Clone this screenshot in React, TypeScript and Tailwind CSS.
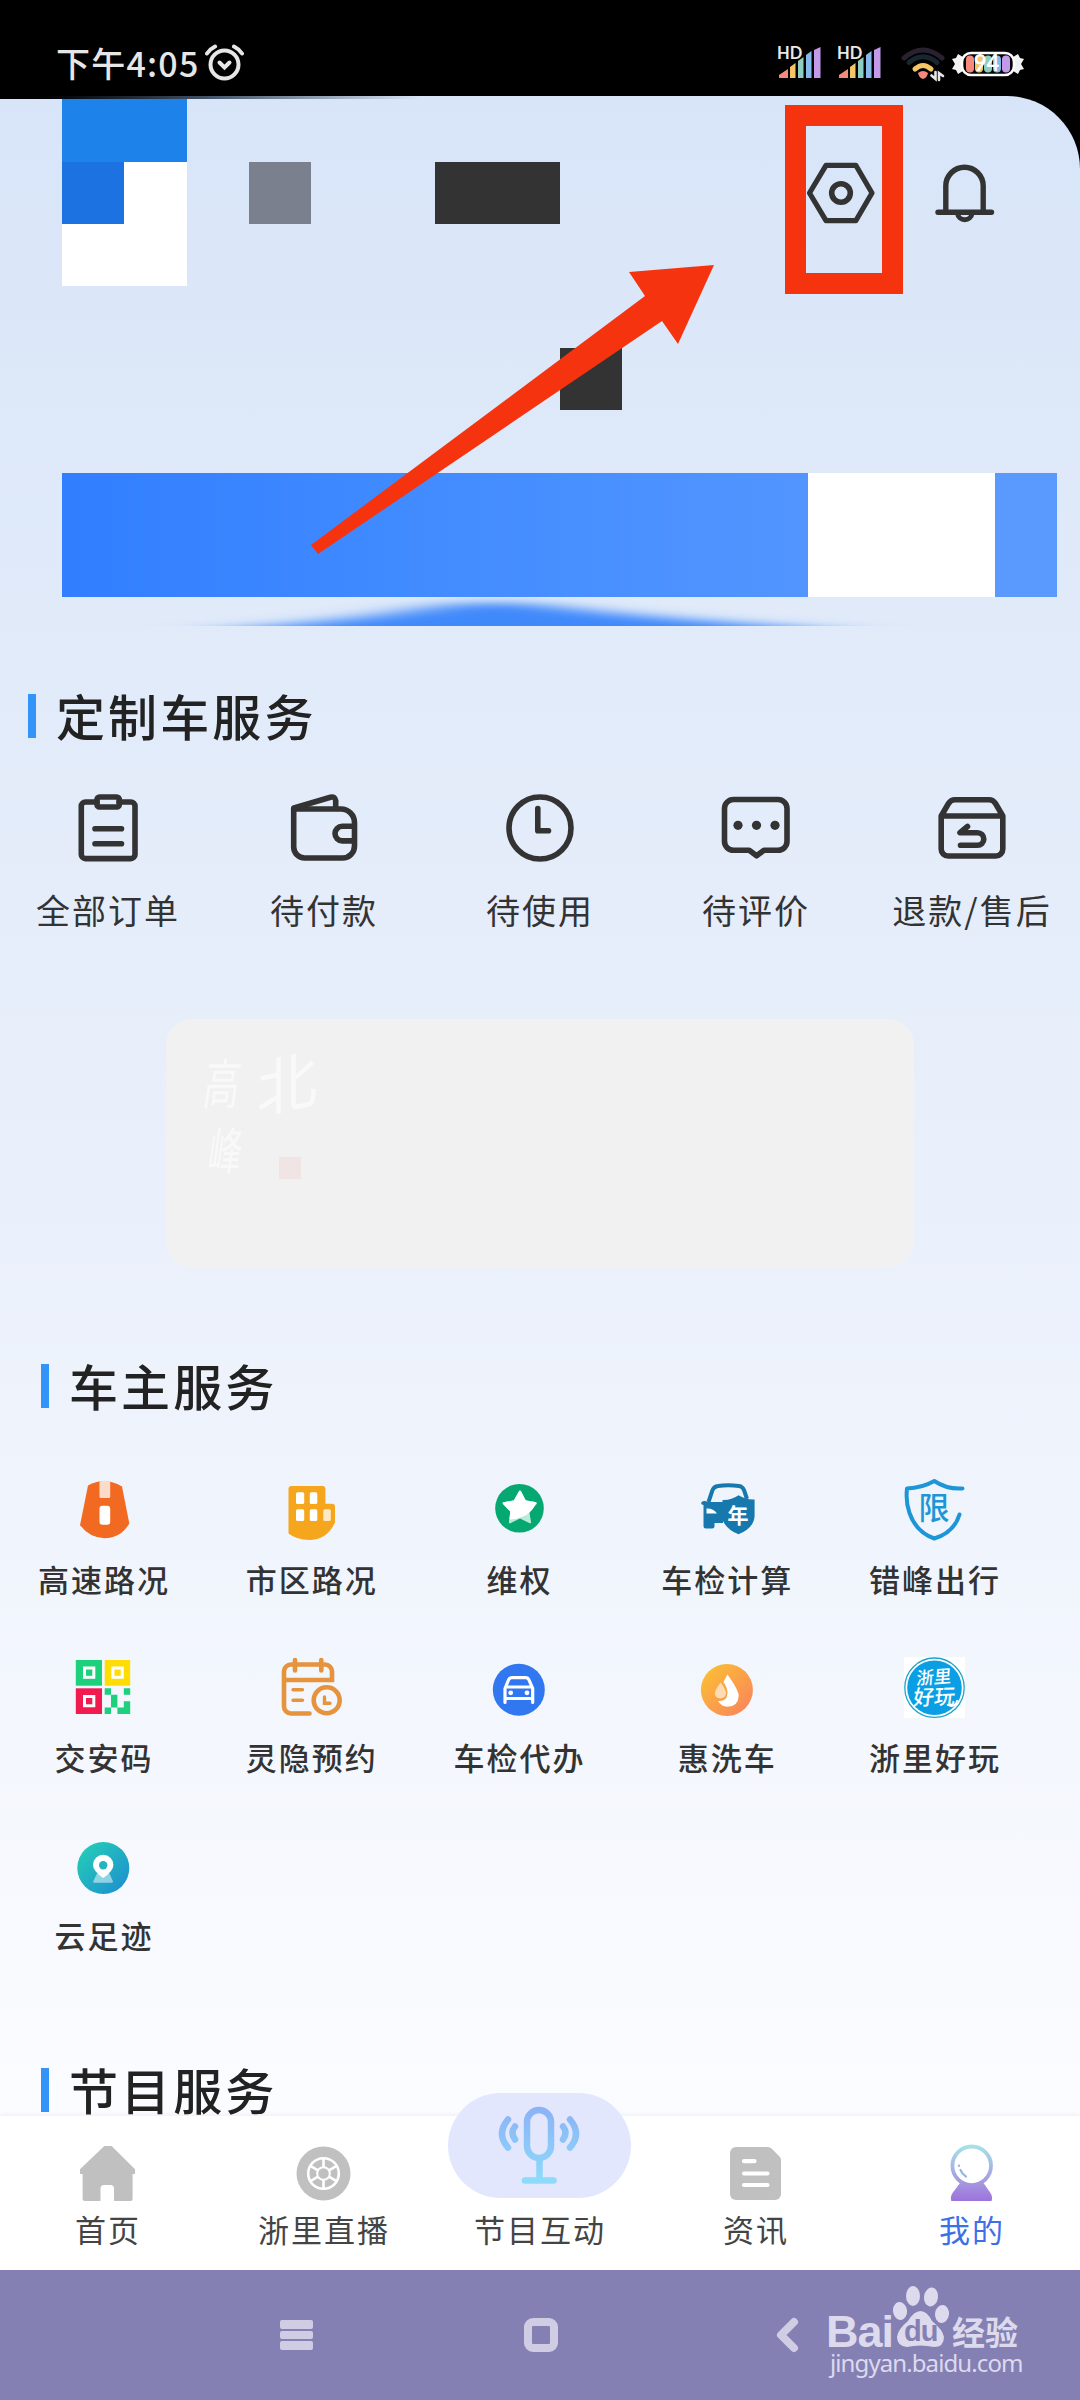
import type { ReactNode } from "react";

type IconProps = { children: ReactNode; size: number };

function Icon({ children, size }: IconProps) {
  return (
    <svg width={size} height={size} viewBox={`0 0 ${size} ${size}`} fill="none" className="shrink-0 overflow-visible">
      {children}
    </svg>
  );
}

function LineIcon({ children }: { children: ReactNode }) {
  return (
    <Icon size={80}>
      <g stroke="#333" strokeWidth="5.6" strokeLinecap="round" strokeLinejoin="round">
        {children}
      </g>
    </Icon>
  );
}

const orders = [
  {
    label: "全部订单",
    icon: (
      <>
        <path d="M29 14H17.5a4.2 4.2 0 0 0-4.2 4.2v48.2a4.2 4.2 0 0 0 4.2 4.2h45.3a4.2 4.2 0 0 0 4.2-4.2V18.2a4.2 4.2 0 0 0-4.2-4.2H51" />
        <rect x="29" y="9" width="22.3" height="10" rx="2.5" />
        <path d="M27 40.7H53.5M27 55.7H53.5" />
      </>
    ),
  },
  {
    label: "待付款",
    icon: (
      <>
        <path d="M9.7 21H57a13.5 13.5 0 0 1 13.5 13.5V58a12 12 0 0 1-12 12H20.7a11 11 0 0 1-11-11Z" />
        <path d="M10 20L46.5 9.2q4.5-1.2 5.2 3.5V20" />
        <path d="M70 38.3H58.3a7.3 7.3 0 0 0 0 14.6H70" />
      </>
    ),
  },
  {
    label: "待使用",
    icon: (
      <>
        <circle cx="40" cy="40" r="31" />
        <path d="M37.8 20.5V42.7H48.5" />
      </>
    ),
  },
  {
    label: "待评价",
    icon: (
      <>
        <path d="M17.5 11.5H62a9 9 0 0 1 9 9v32.8a9 9 0 0 1-9 9H48l-7.4 5.5-7.4-5.5H17.5a9 9 0 0 1-9-9V20.5a9 9 0 0 1 9-9Z" />
        <g fill="#333" stroke="none">
          <circle cx="22" cy="37.3" r="4.6" />
          <circle cx="40.5" cy="37.3" r="4.6" />
          <circle cx="59" cy="37.3" r="4.6" />
        </g>
      </>
    ),
  },
  {
    label: "退款/售后",
    icon: (
      <>
        <path d="M9.2 28L16.5 15.5Q18.8 11.7 23 11.7H57Q61.2 11.7 63.5 15.5L70.8 28V61a7 7 0 0 1-7 7H16.2a7 7 0 0 1-7-7ZM10 28H70" />
        <path d="M35.5 38.5L28 44.7H45.5a6.3 6.3 0 0 1 0 12.6H28.5" />
      </>
    ),
  },
];

const services = [
  {
    label: "高速路况",
    icon: (
      <>
        <path d="M19 11.5Q35.5 2 53 12.5L60.3 49.5Q52 64 35.5 64.2 21 64 11 51.3Z" fill="#f26a22" />
        <path d="M30.5 7.2q5-.7 10.700 0V22.500q0 1.500-1.500 1.500H32q-1.500 0-1.500-1.500Z" fill="#fbdccb" />
        <rect x="30.5" y="31.7" width="10.7" height="19" rx="3" fill="#fff" />
      </>
    ),
  },
  {
    label: "市区路况",
    icon: (
      <>
        <path d="M14.5 12H45.4a3 3 0 0 1 3 3V29.700H55a3 3 0 0 1 3 3V48.500Q50 66 32 66 20 66 11.500 59.500V15a3 3 0 0 1 3-3Z" fill="#f5a61d" />
        <g fill="#fff">
          <rect x="19" y="18.3" width="8.2" height="11.7" rx="1.5" />
          <rect x="32.8" y="18.3" width="7.5" height="11.7" rx="1.5" />
          <rect x="19" y="35.3" width="8.2" height="11.7" rx="1.5" />
          <rect x="32.8" y="35.3" width="7.5" height="11.7" rx="1.5" />
          <rect x="46.3" y="35.3" width="7.5" height="11.7" rx="1.5" opacity=".75" />
        </g>
      </>
    ),
  },
  {
    label: "维权",
    icon: (
      <>
        <circle cx="35.5" cy="34.3" r="24.3" fill="#06a871" />
        <path d="M36 17.5l5 9.8 11 1.9-7.8 8 1.9 11.1-10.1-5-10.1 5 1.5-11.1-7.7-8 10.8-1.9Z" fill="#b9ecd8" stroke="#b9ecd8" strokeWidth="2" strokeLinejoin="round" />
        <path d="M36 17.5l5 9.8 10 1.7Q45 43 26.500 44.500l.9-7.300-7.700-8 10.800-1.900Z" fill="#fff" stroke="#fff" strokeWidth="2" strokeLinejoin="round" />
      </>
    ),
  },
  {
    label: "车检计算",
    icon: (
      <>
        <path d="M16.5 28L20.5 16Q22 12.5 26 12 36 10.5 47 12 50.5 12.5 52 16L55 25" stroke="#1778ae" strokeWidth="4" />
        <path d="M9 29q1-2.5 4-2L17 28H31V49H22.5V52Q22.5 54.5 20 54.5H14Q11.5 54.5 11.5 52V31Q9.5 31 9 29Z" fill="#1778ae" />
        <path d="M30.5 26Q39 26.5 46.5 21.3 54 26 62.6 25.5V42Q62 54 46.5 60.3 35 56 30.5 46Z" fill="#1778ae" />
        <path d="M14.500 34.500Q21 34 25 39.500H14.500Z" fill="#fff" />
        <text x="46" y="48.5" fill="#fff" fontSize="21" fontWeight="700" textAnchor="middle">年</text>
      </>
    ),
  },
  {
    label: "错峰出行",
    icon: (
      <>
        <path d="M62.5 14.5Q47 15.5 34.3 7 22 14 7 14.5 5.5 28 9.5 39 16 58 34.3 64.5 54 58.5 59.5 40.5" stroke="#1c96d6" strokeWidth="4" strokeLinecap="round" strokeLinejoin="round" />
        <text x="34" y="45" fill="#1c96d6" fontSize="31" fontWeight="500" textAnchor="middle">限</text>
      </>
    ),
  },
  {
    label: "交安码",
    icon: (
      <>
        <path d="M6.8 8H33V33.7H6.8Z" fill="#1dd07c" />
        <path d="M35.7 8H61.2V33.7H35.7Z" fill="#ffdc05" />
        <path d="M6.8 36.3H33V62H6.8Z" fill="#f01c50" />
        <path d="M14 14.5h12.3v12.3H14ZM42.4 14.5h12.3v12.3H42.4ZM14 43h12.3v12.3H14Z" fill="#fff" />
        <path d="M17 17.5h6.3v6.3H17Z" fill="#1dd07c" />
        <path d="M45.4 17.5h6.3v6.3H45.4Z" fill="#ffdc05" />
        <path d="M17 46h6.3v6.3H17Z" fill="#f01c50" />
        <path d="M35.7 36.3H42v6.4H48.4V55.6H42V42.7H35.7ZM54.8 36.3h6.4v6.4H54.8ZM35.7 55.6H42V62H35.7ZM54.8 49.2h6.4V62H48.4V55.6H54.8Z" fill="#1dd07c" />
      </>
    ),
  },
  {
    label: "灵隐预约",
    icon: (
      <g stroke="#e6933d" strokeWidth="4.6" strokeLinecap="round">
        <path d="M32.5 61.5H14a7 7 0 0 1-7-7V19.5a7 7 0 0 1 7-7H48a7 7 0 0 1 7 7V28H7M18 8V18.5M44.3 8V18.5" />
        <path d="M16 37.7H25.5M16 48.3H25.5" strokeWidth="3.4" />
        <circle cx="49.7" cy="48.3" r="13" />
        <path d="M47.5 45V51.3H53" strokeWidth="3.4" />
      </g>
    ),
  },
  {
    label: "车检代办",
    icon: (
      <>
        <circle cx="34.8" cy="37.7" r="26" fill="#3178f0" />
        <path d="M21 50.5V36.5L24.5 28Q25.5 25.6 28 25.6H41.5Q44 25.6 45 28L48.7 36.5V50.5M21 46.5H48.7M22.5 35H47.5" stroke="#fff" strokeWidth="3.2" strokeLinecap="round" strokeLinejoin="round" />
        <circle cx="26.7" cy="40.8" r="2.4" fill="#fff" />
        <circle cx="43" cy="40.8" r="2.4" fill="#fff" />
      </>
    ),
  },
  {
    label: "惠洗车",
    icon: (
      <>
        <linearGradient id="wash" x1="0" y1="0" x2="1" y2="1">
          <stop stopColor="#fcc431" />
          <stop offset="1" stopColor="#f9805f" />
        </linearGradient>
        <circle cx="34.9" cy="37.9" r="26" fill="url(#wash)" />
        <path d="M35.4 22.5Q46.7 38 46.7 44 46 54.7 35.5 54.7 29 54.5 26 49Q35 50 35.5 41 35.5 36 31.5 30Z" fill="#fff" />
        <path d="M28.8 30.5Q34 38 34 41.5A5.7 6 0 0 1 22.8 41.5Q23 37.5 28.8 30.5Z" fill="#fddcb5" />
      </>
    ),
  },
  {
    label: "浙里好玩",
    icon: (
      <>
        <path d="M4 5.3H65V66H4Z" fill="#fff" />
        <circle cx="34.5" cy="35.7" r="29.7" stroke="#1ba5c9" strokeWidth="1.3" />
        <circle cx="34.5" cy="35.7" r="27.3" fill="#0a9fe4" />
        <g fill="#fff" fontWeight="500" textAnchor="middle">
          <text transform="translate(33.500 31.500) rotate(-4) skewX(-8)" fontSize="17.500">浙里</text>
          <text transform="translate(33.500 52.500) rotate(-2) skewX(-8)" fontSize="21">好玩</text>
        </g>
        <path d="M47 52.500q8 4.500 10.500-4.500" stroke="#fff" strokeWidth="1.8" />
      </>
    ),
  },
  {
    label: "云足迹",
    icon: (
      <>
        <linearGradient id="trace" x1="0.1" y1="0.1" x2="0.9" y2="0.9">
          <stop stopColor="#24cbb8" />
          <stop offset="1" stopColor="#1e92cf" />
        </linearGradient>
        <circle cx="34.3" cy="38" r="26" fill="url(#trace)" />
        <path d="M28 43.5H40.5L44 51.5Q44 52.7 43 52.7H25.5Q24 52.7 24.2 51.5Z" fill="#fff" opacity=".5" />
        <path d="M34.2 48Q24 41 24 35a10.200 10.200 0 0 1 20.400 0Q44.400 41 34.200 48Z" fill="#fff" />
        <circle cx="34.2" cy="35.3" r="4.2" fill="#23b5c0" />
      </>
    ),
  },
];

const tabs = [
  {
    label: "首页",
    icon: (
      <path
        d="M26.3 2H33.6L57 25.3V30H54.6V55Q54.6 57 52.6 57H36V44.5Q36 41 32.5 41H26Q22.5 41 22.5 44.5V57H6.6Q4.6 57 4.6 55V30H2V25.3Z"
        fill="#c0c0c0"
      />
    ),
  },
  {
    label: "浙里直播",
    icon: (
      <>
        <circle cx="29.5" cy="29.5" r="27" fill="#c0c0c0" />
        <g stroke="#fff" strokeWidth="2.6">
          <circle cx="29.5" cy="29.5" r="15.3" />
          <circle cx="29.5" cy="29.5" r="6.3" strokeWidth="2" />
          <path d="M29.5 14V23M29.5 36V45M16 21.7L24 26.3M35 32.7L43 37.3M43 21.7L35 26.3M24 32.7L16 37.3" />
        </g>
      </>
    ),
  },
  { label: "节目互动" },
  {
    label: "资讯",
    icon: (
      <>
        <path d="M10 3H42Q44 3 45.5 4.5L53.5 12.5Q55 14 55 16V50a6 6 0 0 1-6 6H10a6 6 0 0 1-6-6V9a6 6 0 0 1 6-6Z" fill="#c0c0c0" />
        <path d="M18 17.2H28.5M18 29.5H41.5M18 41H41.5" stroke="#fff" strokeWidth="4.2" strokeLinecap="round" />
      </>
    ),
  },
  {
    label: "我的",
    active: true,
    icon: (
      <>
        <linearGradient id="ball" gradientUnits="userSpaceOnUse" x1="0" y1="2" x2="0" y2="57">
          <stop stopColor="#a5e2e9" />
          <stop offset=".6" stopColor="#a79fe0" />
          <stop offset="1" stopColor="#9d72dc" />
        </linearGradient>
        <circle cx="29.7" cy="21.8" r="19.3" stroke="url(#ball)" strokeWidth="3.8" />
        <path d="M18 39Q30 44 41.5 39L48.5 49Q51 53 49.5 57H9.3Q8 53 10.5 49Z" fill="url(#ball)" />
        <path d="M18.5 26q1.5 4 5.5 6.5" stroke="#9bb5e2" strokeWidth="2.2" strokeLinecap="round" />
        <circle cx="17" cy="21.7" r="1.2" fill="#9bb5e2" />
      </>
    ),
  },
];

function Signal() {
  return (
    <svg width="44" height="32" viewBox="0 0 44 32" className="shrink-0 overflow-visible">
      <path d="M1 31V28L10 22V31Z" fill="#f58a7c" />
      <path d="M12 31V20L17.5 16V31Z" fill="#f6c566" />
      <path d="M20 31V14L25.5 10V31Z" fill="#8ccfc2" />
      <path d="M28 31V8L33.5 4V31Z" fill="#84b9ec" />
      <path d="M36 31V3L42.5 0V31Z" fill="#c39aea" />
      <text x="-1" y="12" fill="#e8e8e8" fontSize="16.5" fontWeight="700" fontFamily="Lato, sans-serif">HD</text>
    </svg>
  );
}

function StatusBar() {
  return (
    <header className="flex h-24 items-start bg-black pl-[56px] text-[#e6e6e6]">
      <span className="mt-[41px] w-[149px] text-[34px] leading-[44px] font-medium tracking-[1.2px] whitespace-nowrap">下午4:05</span>
      <svg width="40" height="38" viewBox="0 0 40 38" fill="none" stroke="#e6e6e6" className="mt-[44px]">
        <circle cx="19.5" cy="20.5" r="14" strokeWidth="4" />
        <path d="M14.5 18.5l5 5 5-5" strokeWidth="4" strokeLinecap="round" />
        <path d="M2 9.5Q5 5 10 2.5M37 9.5Q34 5 29 2.5" strokeWidth="4" strokeLinecap="round" />
      </svg>
      <div className="mt-[47px] ml-[533px] flex items-start">
        <Signal />
        <div className="ml-[16px]">
          <Signal />
        </div>
        <svg width="44" height="36" viewBox="0 0 44 36" fill="none" strokeLinecap="round" className="ml-[19px]">
          <path d="M3 11Q22-5 41 11" stroke="#28212f" strokeWidth="5" />
          <path d="M8 15.5Q22 4 36 15.5" stroke="#182630" strokeWidth="5" />
          <path d="M14 22Q22 15 30 22" stroke="#f6c566" strokeWidth="5" />
          <path d="M17 26Q22 22 27 26 26 31 22 32 18 31 17 26Z" fill="#f58a7c" />
          <path d="M30.500 28.500l4 3.500V25M42 29l-4-3V33" stroke="#e6e6e6" strokeWidth="2.6" />
        </svg>
        <svg width="72" height="28" viewBox="0 0 72 28" className="mt-[3px] ml-[7px]">
          <path d="M11 7L6 4 4 8 0 9 3 14 0 19 4 20 6 24 11 21ZM61 7L66 4 68 8 72 9 69 14 72 19 68 20 66 24 61 21Z" fill="#f2f2f2" />
          <rect x="10" y="3" width="52" height="22" rx="9" fill="#050505" stroke="#fff" strokeWidth="2.6" />
          <rect x="14" y="5.5" width="8" height="17" rx="4" fill="#f58a7c" />
          <rect x="23" y="5.5" width="8" height="17" rx="4" fill="#f6c566" />
          <rect x="32" y="5.5" width="8" height="17" rx="4" fill="#8ccfc2" />
          <rect x="41" y="5.5" width="8" height="17" rx="4" fill="#84b9ec" />
          <rect x="50" y="5.5" width="8" height="17" rx="4" fill="#c39aea" />
          <text x="34.5" y="20.5" fill="#fff" fontSize="22" fontWeight="700" textAnchor="middle" fontFamily="Lato, sans-serif">94</text>
        </svg>
      </div>
    </header>
  );
}

// Profile area, the personal details are pixelated
function Profile() {
  return (
    <section className="h-[530px]">
      <div className="h-[3px] w-[420px] bg-linear-to-r from-black via-[#44566b] to-transparent" />
      <div className="ml-[62px] h-[63px] w-[125px] bg-[#1d82e9]" />
      <div className="flex h-[62px] items-center pl-[62px]">
        <div className="h-full w-[62px] bg-[#1d72e2]" />
        <div className="h-full w-[63px] bg-white" />
        <div className="ml-[62px] h-full w-[62px] bg-[#7a808d]" />
        <div className="ml-[124px] h-full w-[125px] bg-[#333]" />
        <div className="ml-[241px] flex gap-[44px]">
          <LineIcon>
            <path d="M25 12.3H54.8L71 40 54.8 67.7H25L8.500 40Z" strokeWidth="5.2" />
            <circle cx="40" cy="40" r="9.3" />
          </LineIcon>
          <LineIcon>
            <path d="M20.8 58V33a18.7 18.7 0 0 1 37.4 0V58M13 59.3H66.5" strokeWidth="5.4" />
            <path d="M32.5 60.5a7.3 7 0 0 0 14.5 0" strokeWidth="5" />
          </LineIcon>
        </div>
      </div>
      <div className="ml-[62px] h-[62px] w-[125px] bg-white" />
      <div className="mt-[62px] ml-[560px] h-[62px] w-[62px] bg-[#333]" />
      <div className="mt-[63px] flex h-[124px] pl-[62px]">
        <div className="w-[746px] bg-linear-to-r from-[#317eff] via-[#428cff] to-[#5295ff]" />
        <div className="w-[187px] bg-white" />
        <div className="w-[62px] bg-[#5a9aff]" />
      </div>
      <svg width="1080" height="29" viewBox="0 0 1080 29" className="block overflow-hidden">
        <filter id="glow" x="-20%" y="-60%" width="140%" height="220%">
          <feGaussianBlur stdDeviation="34 4.5" />
        </filter>
        <path d="M210 34Q350 24 430 10 490 0 560 10 640 20 850 34V60H210Z" fill="#4089fb" filter="url(#glow)" />
      </svg>
    </section>
  );
}

function SectionTitle({ children }: { children: ReactNode }) {
  return (
    <h2 className="flex h-[60px] items-center gap-[20px] text-[49px] font-medium tracking-[3.1px] text-[#222]">
      <span className="mt-[2px] h-[44px] w-[8px] bg-[#3294f8]" />
      <span className="leading-[60px]">{children}</span>
    </h2>
  );
}

function TabBar() {
  return (
    <nav className="relative grid h-[154px] grid-cols-5 bg-white pt-[28px] shadow-[0_-1px_5px_rgba(0,0,0,0.06)]">
      {tabs.map((t) => (
        <div key={t.label} className="flex flex-col items-center">
          <div className="h-[60px]">{t.icon && <Icon size={60}>{t.icon}</Icon>}</div>
          <span className={`mt-[5px] text-[31px] leading-[40px] tracking-[2px] ${t.active ? "text-[#3d6fe8]" : "text-[#444]"}`}>{t.label}</span>
        </div>
      ))}
      <div className="absolute -top-[23px] left-[448px] h-[105px] w-[183px] rounded-full bg-[#e2e7fd]">
        <svg width="183" height="105" viewBox="0 0 183 105" fill="none">
          <linearGradient id="mic" gradientUnits="userSpaceOnUse" x1="0" y1="14" x2="0" y2="90">
            <stop stopColor="#8cb2f6" />
            <stop offset="1" stopColor="#8ddcfb" />
          </linearGradient>
          <g stroke="url(#mic)" strokeWidth="6.5" strokeLinecap="round">
            <rect x="79" y="17" width="24" height="48" rx="12" />
            <path d="M91.5 66V86M77 87.5H105.5M67 33.5q-5 6 0 13M60 26.5q-12 14.5 0 28M115 33.5q5 6 0 13M122 26.5q12 14.5 0 28" />
          </g>
        </svg>
      </div>
    </nav>
  );
}

function Watermark() {
  return (
    <div className="absolute top-[14px] left-[826px] h-[100px] w-[200px] text-[#dcdaec]">
      <div className="flex h-[64px] items-end font-bold">
        <span className="mb-[-4px] w-[67px] font-['Liberation_Sans',sans-serif] text-[45px] leading-[40px] tracking-[-1px]">Bai</span>
        <div className="relative h-[64px] w-[59px]">
          <svg width="58" height="64" viewBox="0 0 58 64" fill="#dcdaec">
            <ellipse cx="7" cy="27" rx="7" ry="9" transform="rotate(-8 7 27)" />
            <ellipse cx="20" cy="12" rx="7" ry="10" />
            <ellipse cx="38" cy="13" rx="7" ry="9.5" transform="rotate(8 38 13)" />
            <ellipse cx="49" cy="30" rx="7" ry="9" transform="rotate(8 49 30)" />
            <path d="M27.5 27Q34 27 39 37 50 46 51 53 51 63 41 63 27 60 14 63 4 62 4 53 5 45 15 37 21 27 27.5 27Z" />
          </svg>
          <span className="absolute top-[33px] left-[11px] font-['Liberation_Sans',sans-serif] text-[29px] leading-[29px] tracking-[-1px] text-[#8480b4]">du</span>
        </div>
        <span className="mb-[-1px] text-[33px] leading-[36px]">经验</span>
      </div>
      <div className="pl-[4px] font-['Noto_Sans',sans-serif] text-[24px] leading-[30px] tracking-[-0.9px] whitespace-nowrap">jingyan.baidu.com</div>
    </div>
  );
}

export default function App() {
  return (
    <div className="relative h-[2400px] w-[1080px] overflow-hidden bg-black font-['Noto_Sans_CJK_SC','Noto_Sans',sans-serif]">
      <StatusBar />

      <main className="h-[2020px] overflow-hidden rounded-tr-[73px] bg-linear-to-b from-[#d8e5f8] via-[#eaf0fb] via-55% to-[#fbfcff]">
        <Profile />

        <div className="mt-[59px] pl-[28px]">
          <SectionTitle>定制车服务</SectionTitle>
        </div>
        <div className="mt-[43px] grid grid-cols-5">
          {orders.map((o) => (
            <div key={o.label} className="flex flex-col items-center">
              <LineIcon>{o.icon}</LineIcon>
              <span className="mt-[22px] text-[34px] leading-[40px] tracking-[2px] whitespace-nowrap text-[#333]">{o.label}</span>
            </div>
          ))}
        </div>

        <div className="relative mt-[89px] ml-[166px] h-[248px] w-[748px] rounded-[26px] bg-[#f1f1f1] text-[#f9f9f9]">
          <span className="absolute top-[24px] left-[90px] -rotate-12 -skew-x-12 text-[62px] leading-[74px]">北</span>
          <span className="absolute top-[34px] left-[39px] -skew-x-12 scale-y-150 text-[36px] leading-[54px]">高</span>
          <span className="absolute top-[103px] left-[43px] -skew-x-12 scale-y-150 text-[34px] leading-[54px]">峰</span>
          <span className="absolute top-[138px] left-[113px] h-[22px] w-[22px] bg-[#f1e4e4]" />
        </div>

        <div className="mt-[88px] pl-[41px]">
          <SectionTitle>车主服务</SectionTitle>
        </div>
        <div className="mt-[59px] grid w-[1039px] grid-cols-5 gap-y-[53px]">
          {services.map((s) => (
            <div key={s.label} className="flex flex-col items-center">
              <Icon size={70}>{s.icon}</Icon>
              <span className="mt-[15px] text-[31px] leading-[40px] font-medium tracking-[2px] whitespace-nowrap text-[#333]">{s.label}</span>
            </div>
          ))}
        </div>

        <div className="mt-[104px] pl-[41px]">
          <SectionTitle>节目服务</SectionTitle>
        </div>
      </main>

      <TabBar />

      <footer className="relative flex h-[130px] items-center bg-[#8480b4] pl-[280px]">
        <div className="flex w-[33px] flex-col gap-[2px]">
          <span className="h-[8.5px] rounded-[2px] bg-[#cfcce3]" />
          <span className="h-[8.5px] rounded-[2px] bg-[#cfcce3]" />
          <span className="h-[8.5px] rounded-[2px] bg-[#cfcce3]" />
        </div>
        <div className="ml-[211px] h-[34px] w-[34px] rounded-[9px] border-[8px] border-[#cfcce3]" />
        <svg width="24" height="36" viewBox="0 0 24 36" fill="none" className="ml-[217px]">
          <path d="M19 5L6 18 19 31" stroke="#cfcce3" strokeWidth="8" strokeLinecap="round" strokeLinejoin="round" />
        </svg>
        <Watermark />
      </footer>

      {/* Annotation pointing at the settings button */}
      <div className="absolute top-[105px] left-[785px] h-[189px] w-[118px] border-[21px] border-[#f5340f]" />
      <svg width="1080" height="600" viewBox="0 0 1080 600" className="absolute top-0 left-0">
        <path d="M714 265L629 272 645 296 311 545 318 554 662 321 678 344Z" fill="#f5340f" />
      </svg>
    </div>
  );
}
